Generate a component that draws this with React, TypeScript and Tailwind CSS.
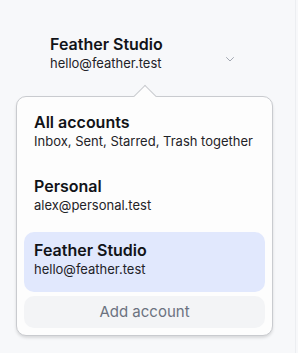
import React from 'react';

const accounts = [
  { name: 'All accounts', detail: 'Inbox, Sent, Starred, Trash together', active: false },
  { name: 'Personal', detail: 'alex@personal.test', active: false },
  { name: 'Feather Studio', detail: 'hello@feather.test', active: true },
];

export default function App() {
  return (
    <div className="flex h-[353px] w-[298px] bg-[#f7f8fa] font-['Inter',sans-serif] text-[#111318]">
      <div className="flex-1">
        {/* Trigger */}
        <button className="flex w-full items-start justify-between pl-[50px] pr-[61px] pt-[34px] text-left">
          <div>
            <div className="text-[16px] font-semibold leading-5">Feather Studio</div>
            <div className="text-[13px] leading-[18px] text-[#1f2328]">hello@feather.test</div>
          </div>
          <svg width="8" height="5" viewBox="0 0 8 5" className="mt-[23px] text-[#a3a8b2]">
            <path d="M0.5 0.5l3.5 3.5 3.5-3.5" fill="none" stroke="currentColor" strokeWidth="1" strokeLinecap="round" strokeLinejoin="round" />
          </svg>
        </button>

        {/* Menu */}
        <div className="relative ml-4 mt-[24px] w-[257px]">
          <div className="absolute left-1/2 top-[-8px] h-4 w-4 -translate-x-1/2 rotate-45 border-l border-t border-[#c9cbcf] bg-[#fdfdfd]" />
          <div className="flex flex-col gap-1 rounded-[10px] border border-[#c9cbcf] bg-[#fdfdfd] p-[7px] shadow-[0_2px_3px_rgba(0,0,0,0.12)]">
            {accounts.map((a) => (
              <div
                key={a.name}
                className={`h-[60px] rounded-[10px] px-[10px] pt-[8px] ${a.active ? 'bg-[#e1e8fd]' : ''}`}
              >
                <div className="text-[16px] font-semibold leading-5">{a.name}</div>
                <div className="text-[13px] leading-[18px] text-[#1f2328]">{a.detail}</div>
              </div>
            ))}
            <button className="h-8 rounded-[10px] bg-[#f3f4f6] text-[15px] text-[#6b7280]">Add account</button>
          </div>
        </div>
      </div>
      <div className="w-[3px] border-l border-[#eceef1] bg-[#f7f8fa]" />
    </div>
  );
}
